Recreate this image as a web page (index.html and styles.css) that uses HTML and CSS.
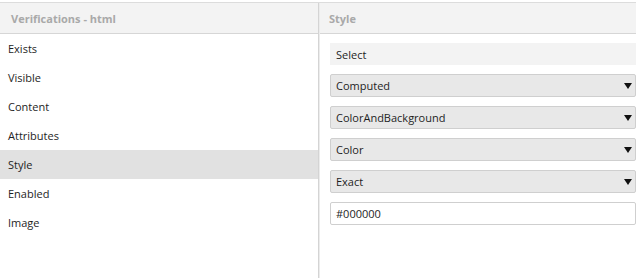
FILE: index.html
```html
<!DOCTYPE html>
<html>
<head>
<meta charset="utf-8">
<link rel="stylesheet" href="styles.css">
</head>
<body>
<div class="app">
  <div class="panel left">
    <div class="head">Verifications - html</div>
    <ul class="list">
      <li class="item">Exists</li>
      <li class="item">Visible</li>
      <li class="item">Content</li>
      <li class="item">Attributes</li>
      <li class="item active">Style</li>
      <li class="item">Enabled</li>
      <li class="item">Image</li>
    </ul>
  </div>
  <div class="panel right">
    <div class="head head-right">Style</div>
    <div class="form">
      <div class="field plain">Select</div>
      <div class="field drop"><span>Computed</span><span class="arrow"></span></div>
      <div class="field drop"><span>ColorAndBackground</span><span class="arrow"></span></div>
      <div class="field drop"><span>Color</span><span class="arrow"></span></div>
      <div class="field drop"><span>Exact</span><span class="arrow"></span></div>
      <div class="field input">#000000</div>
    </div>
  </div>
</div>
</body>
</html>
```
FILE: styles.css
```css
html, body {
  margin: 0;
  padding: 0;
  background: #fff;
}
body {
  font-family: "Open Sans", "Noto Sans", sans-serif;
  font-size: 11px;
  color: #1e1e1e;
  width: 636px;
  height: 278px;
  overflow: hidden;
}
.app {
  margin-top: 2px;
  border-top: 1px solid #dcdcdc;
  display: grid;
  grid-template-columns: 319px 1fr;
  height: 275px;
}
.panel {
  display: flex;
  flex-direction: column;
}
.left {
  border-right: 1px solid #d4d4d4;
}
.right {
  border-left: 1px solid #ececec;
}
.head {
  height: 30px;
  background: #f3f3f3;
  border-bottom: 1px solid #d6d6d6;
  color: #a9a9a9;
  font-weight: bold;
  display: flex;
  align-items: center;
  padding-left: 11px;
}
.head-right {
  padding-left: 9px;
}
.list {
  list-style: none;
  margin: 0;
  padding: 0;
}
.item {
  height: 29px;
  display: flex;
  align-items: center;
  padding-left: 8px;
}
.item.active {
  background: #e1e1e1;
}
.form {
  display: flex;
  flex-direction: column;
  gap: 9px;
  padding: 9px 0 0 10px;
}
.field {
  box-sizing: border-box;
  display: flex;
  align-items: center;
  padding-left: 6px;
  width: 306px;
}
.plain {
  height: 22px;
  background: #f3f3f3;
}
.drop {
  height: 23px;
  background: #e8e8e8;
  border: 1px solid #cfcfcf;
  border-radius: 2px;
  justify-content: space-between;
  padding-left: 5px;
  padding-right: 3px;
}
.arrow {
  width: 0;
  height: 0;
  border-left: 4px solid transparent;
  border-right: 4px solid transparent;
  border-top: 6px solid #111;
}
.input {
  height: 23px;
  background: #fff;
  border: 1px solid #cfcfcf;
  border-radius: 2px;
  padding-left: 5px;
}
```
